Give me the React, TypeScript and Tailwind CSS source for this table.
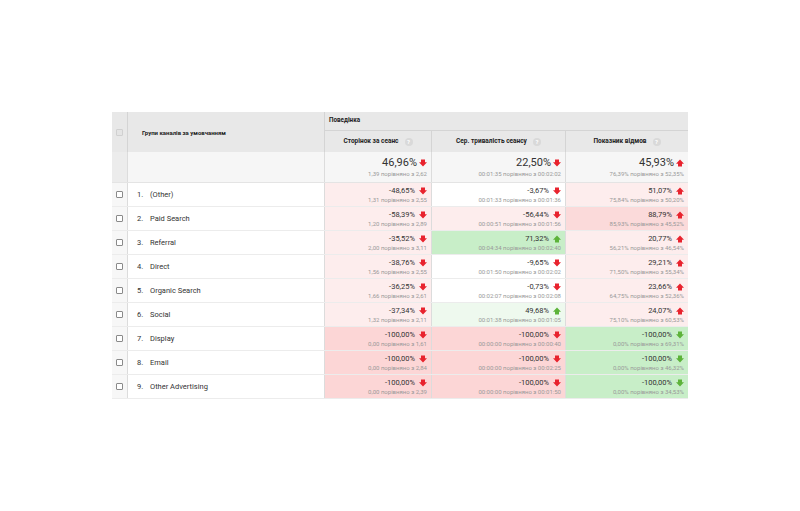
import React from 'react'

type Dir = 'up' | 'down'
type Tone = 'white' | 'pink' | 'pink2' | 'red' | 'green' | 'green2'

type Cell = { v: string; sub: string; dir: Dir; good: boolean; tone: Tone }

const toneBg: Record<Tone, string> = {
  white: 'bg-white',
  pink: 'bg-[#fdeded]',
  pink2: 'bg-[#fbdada]',
  red: 'bg-[#fcd6d6]',
  green: 'bg-[#c8eec8]',
  green2: 'bg-[#eef9ee]',
}

const rows: { name: string; cells: Cell[] }[] = [
  {
    name: '(Other)',
    cells: [
      { v: '-48,65%', sub: '1,31 порівняно з 2,55', dir: 'down', good: false, tone: 'pink' },
      { v: '-3,67%', sub: '00:01:33 порівняно з 00:01:36', dir: 'down', good: false, tone: 'white' },
      { v: '51,07%', sub: '75,84% порівняно з 50,20%', dir: 'up', good: false, tone: 'pink' },
    ],
  },
  {
    name: 'Paid Search',
    cells: [
      { v: '-58,39%', sub: '1,20 порівняно з 2,89', dir: 'down', good: false, tone: 'pink' },
      { v: '-56,44%', sub: '00:00:51 порівняно з 00:01:56', dir: 'down', good: false, tone: 'pink' },
      { v: '88,79%', sub: '85,93% порівняно з 45,52%', dir: 'up', good: false, tone: 'pink2' },
    ],
  },
  {
    name: 'Referral',
    cells: [
      { v: '-35,52%', sub: '2,00 порівняно з 3,11', dir: 'down', good: false, tone: 'pink' },
      { v: '71,32%', sub: '00:04:34 порівняно з 00:02:40', dir: 'up', good: true, tone: 'green' },
      { v: '20,77%', sub: '56,21% порівняно з 46,54%', dir: 'up', good: false, tone: 'pink' },
    ],
  },
  {
    name: 'Direct',
    cells: [
      { v: '-38,76%', sub: '1,56 порівняно з 2,55', dir: 'down', good: false, tone: 'pink' },
      { v: '-9,65%', sub: '00:01:50 порівняно з 00:02:02', dir: 'down', good: false, tone: 'white' },
      { v: '29,21%', sub: '71,50% порівняно з 55,34%', dir: 'up', good: false, tone: 'pink' },
    ],
  },
  {
    name: 'Organic Search',
    cells: [
      { v: '-36,25%', sub: '1,66 порівняно з 2,61', dir: 'down', good: false, tone: 'pink' },
      { v: '-0,73%', sub: '00:02:07 порівняно з 00:02:08', dir: 'down', good: false, tone: 'white' },
      { v: '23,66%', sub: '64,75% порівняно з 52,36%', dir: 'up', good: false, tone: 'pink' },
    ],
  },
  {
    name: 'Social',
    cells: [
      { v: '-37,34%', sub: '1,32 порівняно з 2,11', dir: 'down', good: false, tone: 'pink' },
      { v: '49,68%', sub: '00:01:38 порівняно з 00:01:05', dir: 'up', good: true, tone: 'green2' },
      { v: '24,07%', sub: '75,10% порівняно з 60,53%', dir: 'up', good: false, tone: 'pink' },
    ],
  },
  {
    name: 'Display',
    cells: [
      { v: '-100,00%', sub: '0,00 порівняно з 1,61', dir: 'down', good: false, tone: 'red' },
      { v: '-100,00%', sub: '00:00:00 порівняно з 00:00:40', dir: 'down', good: false, tone: 'red' },
      { v: '-100,00%', sub: '0,00% порівняно з 69,31%', dir: 'down', good: true, tone: 'green' },
    ],
  },
  {
    name: 'Email',
    cells: [
      { v: '-100,00%', sub: '0,00 порівняно з 2,84', dir: 'down', good: false, tone: 'red' },
      { v: '-100,00%', sub: '00:00:00 порівняно з 00:02:25', dir: 'down', good: false, tone: 'red' },
      { v: '-100,00%', sub: '0,00% порівняно з 46,32%', dir: 'down', good: true, tone: 'green' },
    ],
  },
  {
    name: 'Other Advertising',
    cells: [
      { v: '-100,00%', sub: '0,00 порівняно з 2,39', dir: 'down', good: false, tone: 'red' },
      { v: '-100,00%', sub: '00:00:00 порівняно з 00:01:50', dir: 'down', good: false, tone: 'red' },
      { v: '-100,00%', sub: '0,00% порівняно з 34,53%', dir: 'down', good: true, tone: 'green' },
    ],
  },
]

const totals: Cell[] = [
  { v: '46,96%', sub: '1,39 порівняно з 2,62', dir: 'down', good: false, tone: 'white' },
  { v: '22,50%', sub: '00:01:35 порівняно з 00:02:02', dir: 'down', good: false, tone: 'white' },
  { v: '45,93%', sub: '76,39% порівняно з 52,35%', dir: 'up', good: false, tone: 'white' },
]

// chunky block arrow, like the GA comparison marker
function Arrow({ dir, good }: { dir: Dir; good: boolean }) {
  const fill = good ? '#5db33a' : '#e8232e'
  return (
    <svg width="8" height="8" viewBox="0 0 8 8" className="shrink-0">
      {dir === 'down' ? (
        <polygon points="2,0.5 6,0.5 6,3.2 8,3.2 4,7.5 0,3.2 2,3.2" fill={fill} />
      ) : (
        <polygon points="4,0.5 8,4.8 6,4.8 6,7.5 2,7.5 2,4.8 0,4.8" fill={fill} />
      )}
    </svg>
  )
}

function Help() {
  return (
    <span className="ml-[6px] inline-flex h-[8px] w-[8px] items-center justify-center rounded-full bg-[#d9d9d9] text-[6px] font-bold leading-none text-white">
      ?
    </span>
  )
}

function Checkbox() {
  return <span className="block h-[7px] w-[7px] rounded-[1px] border border-[#8a8a8a] bg-white" />
}

const cols = 'grid grid-cols-[16px_197px_107px_134px_122px]'

export default function App() {
  return (
    <div className="h-[511px] w-[800px] bg-white pt-[112px] pl-[112px]" style={{ fontFamily: 'Roboto, "Noto Sans", sans-serif' }}>
      <div className="w-[576px]">
        {/* header */}
        <div className="grid grid-cols-[16px_197px_363px] bg-[#e8e8e8]">
          <div className="flex h-[40px] items-center justify-center border-r border-[#d4d4d4]">
            <span className="block h-[7px] w-[7px] rounded-[1px] border border-[#d0d0d0] bg-[#e4e4e4]" />
          </div>
          <div className="flex items-center border-r border-[#d4d4d4] pl-[14px] text-[6px] font-bold text-[#222]">
            Групи каналів за умовчанням
          </div>
          <div className="flex flex-col">
            <div className="flex h-[19px] items-center border-b border-[#d4d4d4] pl-[4px] text-[6.3px] font-bold text-[#222]">
              Поведінка
            </div>
            <div className="grid h-[21px] grid-cols-[107px_134px_122px] text-[6.5px] font-bold text-[#222]">
              <div className="flex items-center justify-center border-r border-[#d4d4d4]">
                Сторінок за сеанс
                <Help />
              </div>
              <div className="flex items-center justify-center border-r border-[#d4d4d4]">
                Сер. тривалість сеансу
                <Help />
              </div>
              <div className="flex items-center justify-center">
                Показник відмов
                <Help />
              </div>
            </div>
          </div>
        </div>

        {/* totals */}
        <div className={`${cols} h-[31px] border-b border-[#e4e4e4] bg-[#f6f6f6]`}>
          <div className="border-r border-[#dcdcdc] bg-[#ececec]" />
          <div className="border-r border-[#dcdcdc]" />
          {totals.map((c, i) => (
            <div
              key={i}
              className={`flex flex-col items-end justify-center pr-[4px] ${i < 2 ? 'border-r border-[#dcdcdc]' : ''}`}
            >
              <div className="flex items-center gap-[2px] text-[11px] leading-[13px] text-[#333]">
                {c.v}
                <Arrow dir={c.dir} good={c.good} />
              </div>
              <div className="text-[6px] leading-[9px] text-[#999]">{c.sub}</div>
            </div>
          ))}
        </div>

        {/* rows */}
        {rows.map((r, ri) => (
          <div key={ri} className={`${cols} h-[24px] border-b border-[#ececec]`}>
            <div className="flex items-center justify-center border-r border-[#dcdcdc] bg-[#f7f7f7]">
              <Checkbox />
            </div>
            <div className="flex items-center border-r border-[#dcdcdc] text-[7.5px] text-[#333]">
              <span className="box-content w-[14px] pl-[9px]">{ri + 1}.</span>
              <span className="ml-[-1px]">{r.name}</span>
            </div>
            {r.cells.map((c, i) => (
              <div
                key={i}
                className={`flex flex-col items-end justify-center pr-[4px] ${toneBg[c.tone]} ${i < 2 ? 'border-r border-[#dcdcdc]' : ''}`}
              >
                <div className="flex items-center gap-[4px] text-[7.5px] leading-[10px] text-[#333]">
                  {c.v}
                  <Arrow dir={c.dir} good={c.good} />
                </div>
                <div className="text-[6px] leading-[8px] text-[#999]">{c.sub}</div>
              </div>
            ))}
          </div>
        ))}
      </div>
    </div>
  )
}
